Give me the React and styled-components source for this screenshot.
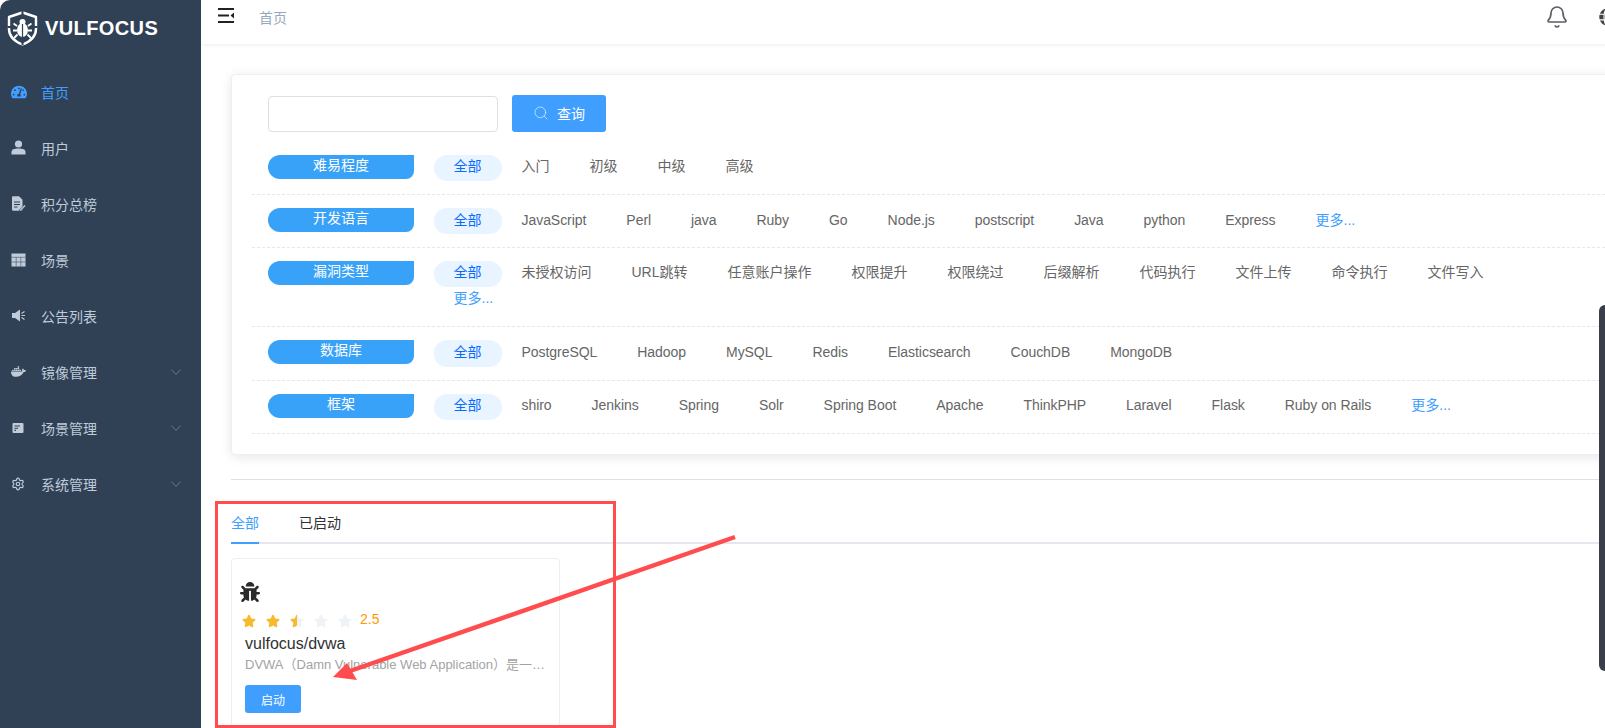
import styled, { createGlobalStyle } from 'styled-components';
import { FaTachometerAlt, FaDocker, FaBug, FaStar, FaGlobe } from 'react-icons/fa';
import { ChevronDown, Bell, Search, Settings } from 'lucide-react';

const GlobalStyle = createGlobalStyle`
  html, body { margin: 0; padding: 0; height: 100%; overflow: hidden; background: #fff; }
  body { font-family: "Liberation Sans", "Noto Sans CJK SC", sans-serif; font-size: 14px; }
  * { box-sizing: border-box; }
`;

const Logo = () => (
  <svg width="31" height="35" viewBox="0 0 31 35" fill="none">
    <path d="M15.5 1.5 L29 6 V18 C29 26 22 31 15.5 33.5 C9 31 2 26 2 18 V6 Z" stroke="#fff" strokeWidth="2.4" strokeLinejoin="round" />
    <path d="M15.5 0 v4 M0.5 16 h4 M26.5 16 h4 M15.5 30 v4" stroke="#304156" strokeWidth="2" />
    <ellipse cx="15.5" cy="19" rx="5.5" ry="7" fill="#fff" />
    <circle cx="15.5" cy="11" r="3" fill="#fff" />
    <path d="M15.5 13 v13" stroke="#304156" strokeWidth="1.2" />
    <path d="M10 15 L6.5 12.5 M10 19.5 H6 M10.5 23.5 L7 27 M21 15 L24.5 12.5 M21 19.5 H25 M20.5 23.5 L24 27" stroke="#fff" strokeWidth="1.8" />
  </svg>
);

const UserIcon = () => (
  <svg width="15" height="15" viewBox="0 0 15 15" fill="currentColor">
    <circle cx="7.5" cy="4" r="3.6" />
    <path d="M0.5 12 C0.5 9.5 3 8.5 7.5 8.5 C12 8.5 14.5 9.5 14.5 12 V14.5 H0.5 Z" />
  </svg>
);

const DocIcon = () => (
  <svg width="15" height="15" viewBox="0 0 15 15">
    <path d="M1 1.5 C1 .8 1.5 .3 2.2 .3 H8 L11.5 3.8 V13.5 C11.5 14.2 11 14.7 10.3 14.7 H2.2 C1.5 14.7 1 14.2 1 13.5 Z" fill="currentColor" />
    <path d="M3 6 H9 M3 8.5 H9 M3 11 H6.5" stroke="#304156" strokeWidth="1.1" />
    <path d="M8.5 13.8 L13.5 8.8 L14.8 10 L9.8 15 H8.5 Z" fill="currentColor" stroke="#304156" strokeWidth="0.6" />
  </svg>
);

const TableIcon = () => (
  <svg width="15" height="14" viewBox="0 0 15 14">
    <rect x="0.5" y="0.5" width="14" height="13" fill="currentColor" />
    <path d="M0.5 4.3 H14.5 M0.5 9 H14.5 M5.2 4.3 V13.5 M9.8 4.3 V13.5" stroke="#304156" strokeWidth="0.8" strokeOpacity="0.65" />
  </svg>
);

const SpeakerIcon = () => (
  <svg width="15" height="15" viewBox="0 0 15 15" fill="currentColor">
    <path d="M1 5 H4 L9 1.5 V13.5 L4 10 H1 Z" />
    <path d="M10.5 5.5 L13.5 3.5 M10.5 7.5 H14 M10.5 9.5 L13.5 11.5" stroke="currentColor" strokeWidth="1.2" />
  </svg>
);

const SceneIcon = () => (
  <svg width="14" height="14" viewBox="0 0 14 14">
    <rect x="1.5" y="2" width="11" height="10" rx="1" fill="currentColor" />
    <path d="M3.5 5 H9 M3.5 7.2 H7 M3.5 9.4 H5" stroke="#304156" strokeWidth="1.1" />
  </svg>
);

const Hamburger = () => (
  <svg width="16" height="15" viewBox="0 0 16 15">
    <path d="M0 1 H16 M0 7.5 H11 M0 14 H16" stroke="#222" strokeWidth="2" />
    <path d="M16 4.5 V10.5 L12.5 7.5 Z" fill="#222" />
  </svg>
);

const menu = [
  { label: '首页', icon: <FaTachometerAlt size={16} />, active: true },
  { label: '用户', icon: <UserIcon /> },
  { label: '积分总榜', icon: <DocIcon /> },
  { label: '场景', icon: <TableIcon /> },
  { label: '公告列表', icon: <SpeakerIcon /> },
  { label: '镜像管理', icon: <FaDocker size={15} />, sub: true },
  { label: '场景管理', icon: <SceneIcon />, sub: true },
  { label: '系统管理', icon: <Settings size={14} />, sub: true },
];

const filters = [
  { title: '难易程度', items: ['入门', '初级', '中级', '高级'] },
  { title: '开发语言', low: true, items: ['JavaScript', 'Perl', 'java', 'Ruby', 'Go', 'Node.js', 'postscript', 'Java', 'python', 'Express'], more: true },
  { title: '漏洞类型', items: ['未授权访问', 'URL跳转', '任意账户操作', '权限提升', '权限绕过', '后缀解析', '代码执行', '文件上传', '命令执行', '文件写入'], more: true },
  { title: '数据库', low: true, items: ['PostgreSQL', 'Hadoop', 'MySQL', 'Redis', 'Elasticsearch', 'CouchDB', 'MongoDB'], tall: true },
  { title: '框架', items: ['shiro', 'Jenkins', 'Spring', 'Solr', 'Spring Boot', 'Apache', 'ThinkPHP', 'Laravel', 'Flask', 'Ruby on Rails'], more: true },
];

const isLatin = text => /^[\x20-\x7e]+$/.test(text);

const App = () => {
  return (
    <Page>
      <GlobalStyle />
      <Sidebar>
        <Brand>
          <Logo />
          <BrandName>VULFOCUS</BrandName>
        </Brand>
        {menu.map(item => (
          <MenuItem key={item.label} $active={item.active}>
            <MenuIcon>{item.icon}</MenuIcon>
            <span>{item.label}</span>
            {item.sub && <Chevron><ChevronDown size={18} strokeWidth={1.2} /></Chevron>}
          </MenuItem>
        ))}
      </Sidebar>

      <Main>
        <Inner>
          <Header>
            <HamburgerBox><Hamburger /></HamburgerBox>
            <Crumb>首页</Crumb>
            <HeaderRight>
              <Bell size={24} strokeWidth={1.7} color="#5a5e66" />
              <FaGlobe size={18} color="#444" />
            </HeaderRight>
          </Header>

          <Content>
            <FilterCard>
              <SearchRow>
                <SearchInput />
                <SearchButton>
                  <Search size={16} strokeWidth={1.2} color="#d6e9ff" />
                  <span>查询</span>
                </SearchButton>
              </SearchRow>
              {filters.map(f => (
                <FilterRow key={f.title}>
                  <RowLabel>{f.title}</RowLabel>
                  <Options>
                    <AllPill $tall={f.tall} $low={f.low}>全部</AllPill>
                    {f.items.map(i => <Option key={i} $latin={isLatin(i)} $low={f.low}>{i}</Option>)}
                    {f.more && <Option $more $low={f.low}>更多...</Option>}
                  </Options>
                </FilterRow>
              ))}
            </FilterCard>

            <Divider />

            <Tabs>
              <Tab $active>全部</Tab>
              <Tab>已启动</Tab>
            </Tabs>

            <ImageCard>
              <BugBox><FaBug size={20} color="#2b2b2b" /></BugBox>
              <Rating>
                <FaStar size={14} color="#f7ba2a" />
                <FaStar size={14} color="#f7ba2a" />
                <HalfStar>
                  <FaStar size={14} color="#eff2f7" />
                  <HalfFill><FaStar size={14} color="#f7ba2a" /></HalfFill>
                </HalfStar>
                <FaStar size={14} color="#eff2f7" />
                <FaStar size={14} color="#eff2f7" />
                <Score>2.5</Score>
              </Rating>
              <ImageName>vulfocus/dvwa</ImageName>
              <ImageDesc>DVWA（Damn Vulnerable Web Application）是一个用来进行安全脆弱性鉴定的PHP/MySQL Web应用</ImageDesc>
              <StartButton>启动</StartButton>
            </ImageCard>
          </Content>
        </Inner>
      </Main>

      <RedBox />
      <Arrow width="1605" height="728" viewBox="0 0 1605 728">
        <path d="M735 537 L350 671" stroke="#ff4d4f" strokeWidth="4.5" />
        <path d="M333 677 L347 663 L357 680 Z" fill="#ff4d4f" />
      </Arrow>
      <ScrollEdge />
    </Page>
  );
};

const Page = styled.div`
  display: flex;
  height: 100vh;
  overflow: hidden;
  position: relative;
`;

const Sidebar = styled.aside`
  width: 201px;
  flex-shrink: 0;
  background: #304156;
  border-top-left-radius: 10px;
`;

const Brand = styled.div`
  height: 64px;
  display: flex;
  align-items: center;
  gap: 7px;
  padding: 0 0 8px 7px;
`;

const BrandName = styled.span`
  color: #fff;
  font-size: 20px;
  font-weight: 700;
  letter-spacing: 0.4px;
`;

const MenuItem = styled.div`
  height: 56px;
  display: flex;
  align-items: center;
  padding-bottom: 1px;
  color: ${props => (props.$active ? '#409eff' : '#bfcbd9')};
  font-size: 14px;
`;

const MenuIcon = styled.span`
  width: 41px;
  padding-left: 11px;
  display: flex;
  align-items: center;
`;

const Chevron = styled.span`
  margin-left: auto;
  margin-right: 16px;
  display: flex;
  color: #717d8c;
`;

const Main = styled.main`
  flex: 1;
  min-width: 0;
  overflow: hidden;
`;

const Inner = styled.div`
  width: 1440px;
`;

const Header = styled.header`
  height: 44px;
  display: flex;
  align-items: center;
  box-shadow: 0 1px 4px rgba(0, 21, 41, 0.08);
  padding-right: 24px;
`;

const HamburgerBox = styled.div`
  display: flex;
  padding: 0 0 13px 17px;
`;

const Crumb = styled.span`
  margin-left: 25px;
  color: #97a8be;
  font-size: 14px;
  padding-bottom: 10px;
`;

const HeaderRight = styled.div`
  margin-left: auto;
  display: flex;
  align-items: center;
  gap: 30px;
  padding-bottom: 10px;
`;

const Content = styled.div`
  padding: 30px 0 0 30px;
`;

const FilterCard = styled.section`
  background: #fff;
  border: 1px solid #ebeef5;
  border-radius: 4px;
  box-shadow: 0 2px 12px rgba(0, 0, 0, 0.1);
  padding: 20px;
`;

const SearchRow = styled.div`
  display: flex;
  align-items: flex-end;
  gap: 14px;
  padding-left: 16px;
  margin-bottom: 10px;
`;

const SearchInput = styled.input`
  width: 230px;
  height: 36px;
  border: 1px solid #dcdfe6;
  border-radius: 4px;
  outline: none;
  background: #fff;
`;

const SearchButton = styled.button`
  width: 94px;
  height: 37px;
  border: none;
  border-radius: 3px;
  padding: 0 0 2px;
  background: #409eff;
  color: #fff;
  font-family: inherit;
  font-size: 14px;
  display: flex;
  align-items: center;
  justify-content: center;
  gap: 8px;
`;

const FilterRow = styled.div`
  display: flex;
  align-items: flex-start;
  gap: 20px;
  padding: 13px 0 13px 16px;
  border-bottom: 1px dashed #e4e7ed;
`;

const RowLabel = styled.div`
  width: 146px;
  height: 24px;
  flex-shrink: 0;
  background: #38a2f8;
  color: #fff;
  font-size: 14px;
  line-height: 20px;
  text-align: center;
  border-radius: 12px 0 8px 12px;
`;

const Options = styled.div`
  width: 1130px;
  flex-shrink: 0;
  display: flex;
  flex-wrap: wrap;
`;

const AllPill = styled.span`
  height: ${props => (props.$tall ? '27px' : '26px')};
  line-height: ${props => (props.$low ? '25px' : '23px')};
  padding: 0 20.5px 0 19.5px;
  border-radius: 13px;
  background: #e8f4ff;
  color: #0a6cff;
  font-size: 14px;
`;

const Option = styled.span`
  height: 26px;
  line-height: ${props => (props.$low ? '25px' : '23px')};
  padding: 0 20.5px 0 19.5px;
  font-size: 14px;
  letter-spacing: ${props => (props.$latin ? '-0.05px' : '0')};
  color: ${props => (props.$more ? '#409eff' : '#666')};
`;

const Divider = styled.div`
  height: 1px;
  background: #dcdfe6;
  margin: 24px 0 24px;
`;

const Tabs = styled.div`
  display: flex;
  gap: 40px;
  height: 40px;
  border-bottom: 2px solid #e4e7ed;
`;

const Tab = styled.div`
  height: 40px;
  line-height: 38px;
  font-size: 14px;
  color: ${props => (props.$active ? '#409eff' : '#303133')};
  border-bottom: ${props => (props.$active ? '2px solid #409eff' : 'none')};
`;

const ImageCard = styled.article`
  width: 329px;
  height: 170px;
  margin-top: 14px;
  border: 1px solid #ebeef5;
  border-radius: 4px;
  padding: 23px 8px 0 13px;
`;

const BugBox = styled.div`
  display: flex;
  height: 20px;
  margin-left: -5px;
`;

const Rating = styled.div`
  display: flex;
  align-items: center;
  gap: 10px;
  height: 20px;
  margin: 9px 0 0 -3px;
`;

const HalfStar = styled.span`
  position: relative;
  display: flex;
`;

const HalfFill = styled.span`
  position: absolute;
  left: 0;
  top: 0;
  width: 7px;
  overflow: hidden;
  display: flex;

  svg {
    flex-shrink: 0;
  }
`;

const Score = styled.span`
  color: #ff9900;
  font-size: 14px;
  margin: -5px 0 0 -2px;
`;

const ImageName = styled.div`
  margin-top: 3px;
  height: 20px;
  line-height: 20px;
  font-size: 16px;
  color: #303133;
`;

const ImageDesc = styled.div`
  margin-top: 1px;
  height: 20px;
  line-height: 20px;
  font-size: 13px;
  color: #a3a3a3;
  white-space: nowrap;
  overflow: hidden;
  text-overflow: ellipsis;
`;

const StartButton = styled.button`
  display: block;
  margin-top: 10px;
  width: 56px;
  height: 28px;
  border: none;
  border-radius: 3px;
  background: #409eff;
  color: #fff;
  font-family: inherit;
  font-size: 12px;
`;

const RedBox = styled.div`
  position: absolute;
  left: 215px;
  top: 501px;
  width: 401px;
  height: 227px;
  border: 3px solid #ff4d4f;
  pointer-events: none;
`;

const Arrow = styled.svg`
  position: absolute;
  left: 0;
  top: 0;
  pointer-events: none;
`;

const ScrollEdge = styled.div`
  position: absolute;
  right: 0;
  top: 305px;
  width: 6px;
  height: 366px;
  background: #3a3d4a;
  border-radius: 6px 0 0 6px;
`;

export default App;
